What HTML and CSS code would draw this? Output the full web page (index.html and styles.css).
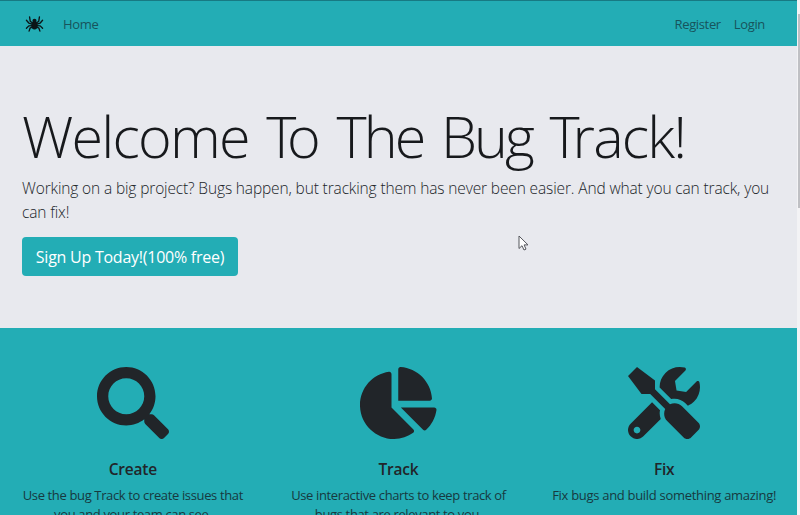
FILE: index.html
```
<!DOCTYPE html>
<html lang="en">
<head>
<meta charset="utf-8">
<title>Bug Track</title>
<link rel="stylesheet" href="styles.css">
</head>
<body>
<div class="page">
  <nav class="navbar">
    <svg class="brand" viewBox="0 0 20 18">
      <ellipse cx="10" cy="10.500" rx="3.300" ry="4.200"/><circle cx="10" cy="5.800" r="2.200"/>
      <path d="M8 8 5.500 6 4.800 1.500M7.500 9.200 4 8 1.500 5M7.500 10.800 4 11 1.500 13.500M8 12 5.300 13.400 4.300 16.500M12 8l2.500-2 .7-4.500M12.500 9.200 16 8l2.500-3M12.500 10.800l3.500.2 2.500 2.500M12 12l2.700 1.400 1 3.100"/>
    </svg>
    <a class="home">Home</a>
    <div class="account"><a>Register</a><a>Login</a></div>
  </nav>
  <header class="hero">
    <h1>Welcome <span class="kern">T</span>o <span class="tight">The</span> <span class="tight">Bug</span> <span class="kern-r">T</span>rack!</h1>
    <p class="lead">Working on a big project? Bugs happen, but tracking them has never been easier. And what you can track, you<br>can fix!</p>
    <a class="signup">Sign Up Today!(100% free)</a>
  </header>
  <main class="features">
    <section>
      <svg viewBox="0 0 512 512"><path d="M505 442.700L405.300 343c-4.500-4.500-10.600-7-17-7H372c27.600-35.300 44-79.700 44-128C416 93.100 322.900 0 208 0S0 93.100 0 208s93.100 208 208 208c48.300 0 92.700-16.400 128-44v16.300c0 6.400 2.500 12.500 7 17l99.700 99.700c9.400 9.400 24.600 9.400 33.900 0l28.300-28.300c9.400-9.400 9.400-24.600.1-34zM208 336c-70.700 0-128-57.200-128-128 0-70.700 57.200-128 128-128 70.700 0 128 57.200 128 128 0 70.700-57.200 128-128 128z"/></svg>
      <h2>Create</h2>
      <p>Use the bug Track to create issues that<br>you and your team can see.</p>
    </section>
    <section>
      <svg class="pie" viewBox="0 0 544 512"><path d="M527.790 288H290.500l158.030 158.030c6.040 6.040 15.980 6.530 22.190.68 38.700-36.460 65.320-85.610 73.130-140.860 1.340-9.460-6.510-17.850-16.060-17.850zm-15.830-64.800C503.720 103.740 408.260 8.280 288.800.04 279.680-.59 272 7.100 272 16.240V240h223.770c9.140 0 16.820-7.680 16.190-16.800zM224 288V50.710c0-9.550-8.390-17.400-17.840-16.060C86.990 51.490-4.100 155.600.14 280.370 4.500 408.510 114.830 513.590 243.030 511.980c50.400-.63 96.970-16.870 135.260-44.030 7.900-5.600 8.420-17.230 1.570-24.080L224 288z"/></svg>
      <h2>Track</h2>
      <p>Use interactive charts to keep track of<br>bugs that are relevant to you.</p>
    </section>
    <section>
      <svg viewBox="0 0 512 512"><path d="M501.100 395.700L384 278.600c-23.100-23.100-57.600-27.600-85.400-13.900L192 158.100V96L64 0 0 64l96 128h62.100l106.600 106.600c-13.600 27.800-9.200 62.300 13.900 85.400l117.100 117.100c14.600 14.600 38.200 14.600 52.700 0l52.700-52.700c14.500-14.600 14.500-38.200 0-52.700zM331.700 225c28.300 0 54.900 11 74.900 31l19.400 19.400c15.800-6.900 30.800-16.500 43.800-29.500 37.100-37.100 49.700-89.300 37.900-136.700-2.200-9-13.500-12.100-20.100-5.500l-74.400 74.400-67.900-11.300L334 98.900l74.400-74.400c6.600-6.600 3.400-17.900-5.700-20.200-47.400-11.700-99.600.9-136.600 37.900-28.500 28.500-41.900 66.100-41.200 103.600l82.100 82.100c8.100-1.900 16.500-2.900 24.700-2.900zm-103.900 82l-56.700-56.700L18.700 402.800c-25 25-25 65.500 0 90.500s65.500 25 90.500 0l123.600-123.600c-7.600-19.900-9.900-41.600-5-62.700zM64 472c-13.200 0-24-10.800-24-24 0-13.300 10.700-24 24-24s24 10.700 24 24c0 13.200-10.700 24-24 24z"/></svg>
      <h2>Fix</h2>
      <p class="wide">Fix bugs and build something amazing!</p>
    </section>
  </main>
</div>
<div class="scrollbar"><div class="thumb"></div></div>
<svg class="cursor" viewBox="0 0 11 17"><path d="M1 1v12.500l3-2.800 2 4.300 2-.9-1.900-4.200H10z"/></svg>
</body>
</html>
```
FILE: styles.css
```
* { box-sizing: border-box; }
body {
  margin: 0;
  height: 515px;
  display: flex;
  overflow: hidden;
  font-family: "Open Sans", "Noto Sans", sans-serif;
  color: #212529;
  background: #e8e9ee;
}
.page { width: 797px; height: 515px; overflow: hidden; }
.navbar {
  height: 46px;
  padding: 0 32px 0 25px;
  display: flex;
  align-items: center;
  background: #23adb5;
  border-top: 1px solid #177a83;
  font-size: 13px;
  letter-spacing: -0.350px;
  color: #17545c;
}
.brand { width: 19px; height: 18px; margin-right: 19px; fill: #0b1517; }
.brand path { fill: none; stroke: #0b1517; stroke-width: 1.400; stroke-linecap: round; stroke-linejoin: round; }
.account { margin-left: auto; display: flex; gap: 13px; }
.hero { height: 282px; padding: 53px 22px 0; background: #e8e9ee; }
h1 {
  margin: 0;
  height: 77px;
  line-height: 75px;
  font-size: 57.500px;
  font-weight: 300;
  letter-spacing: -1.800px;
  word-spacing: 4.500px;
  white-space: nowrap;
  color: #17191c;
}
.kern { letter-spacing: -9.500px; }
.kern-r { letter-spacing: -7px; }
.tight { letter-spacing: -3px; }
.lead {
  margin: 0 0 12px;
  font-size: 15.500px;
  line-height: 24.300px;
  font-weight: 300;
  letter-spacing: -0.138px;
  white-space: nowrap;
}
.signup {
  display: flex;
  align-items: center;
  justify-content: center;
  width: 216px;
  height: 39px;
  padding-top: 1px;
  border-radius: 4px;
  background: #23adb5;
  color: #fff;
  font-size: 16px;
  letter-spacing: -0.250px;
  white-space: nowrap;
}
.features {
  height: 187px;
  padding-top: 38.500px;
  display: grid;
  grid-template-columns: repeat(3, 1fr);
  background: #23adb5;
  text-align: center;
}
.features svg { display: block; width: 72px; height: 72px; margin: 0 auto; fill: #212529; }
.features .pie { width: 76.500px; }
h2 { margin: 20.500px 0 6px; font-size: 15.500px; line-height: 21px; font-weight: 600; letter-spacing: -0.200px; }
.features p { margin: 0; font-size: 13px; line-height: 19px; letter-spacing: -0.360px; white-space: nowrap; color: #17393f; }
.features .wide { letter-spacing: -0.300px; }
.scrollbar { width: 3px; height: 515px; padding-top: 14px; background: #f3f3f5; }
.thumb { width: 2px; height: 194px; margin-left: 1px; background: #bfc0c4; }
.cursor { position: absolute; left: 518px; top: 235px; width: 11px; height: 17px; fill: #fff; stroke: #55565c; stroke-width: 1; }
```
